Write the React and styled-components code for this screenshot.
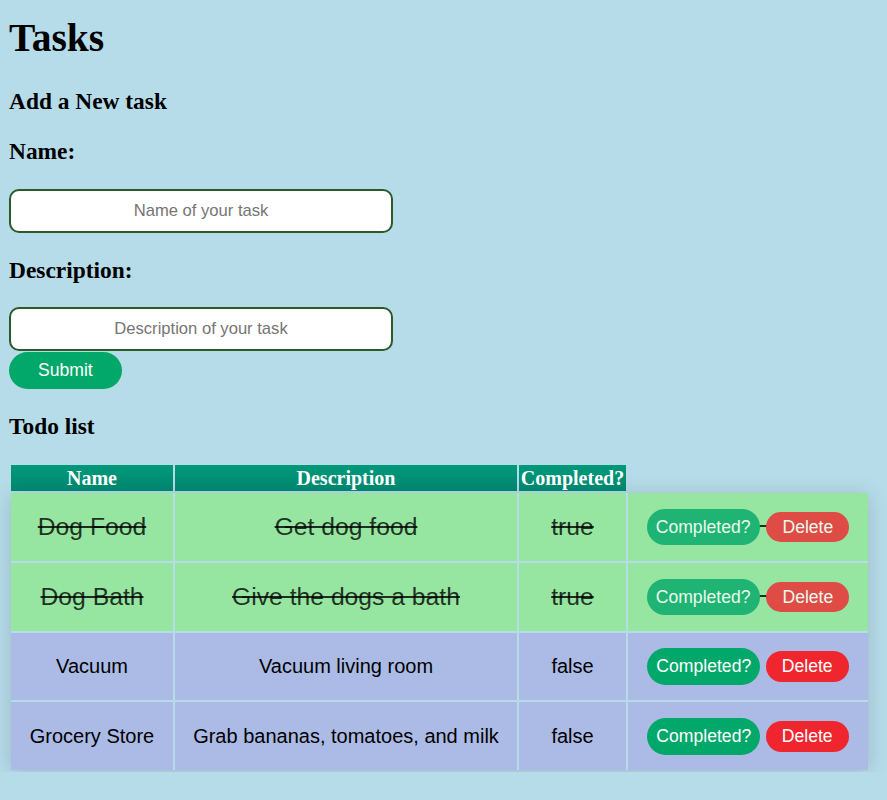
import React from "react";
import styled, { createGlobalStyle } from "styled-components";

const Global = createGlobalStyle`
  html, body {
    margin: 0;
    padding: 0;
    background: #b6dcea;
  }
  body {
    font-family: "Liberation Serif", "Times New Roman", serif;
  }
`;

const Page = styled.div`
  padding: 0 9px;
`;

const Title = styled.h1`
  font-family: "Liberation Serif", "Times New Roman", serif;
  font-size: 39.5px;
  line-height: 1.15;
  font-weight: bold;
  margin: 15.7px 0 26.6px;
  color: #000;
`;

const Heading = styled.h3`
  font-family: "Liberation Serif", "Times New Roman", serif;
  font-size: 23.4px;
  line-height: 26.45px;
  font-weight: bold;
  margin: 24px 0;
  color: #000;
`;

const Form = styled.form`
  display: block;
  margin: 0;
`;

const Input = styled.input`
  display: block;
  box-sizing: border-box;
  width: 384px;
  height: 44px;
  margin: 0 0 ${(p) => p.$mb || 0}px;
  padding: 0 12px;
  border: 2px solid #2b5a2b;
  border-radius: 10px;
  background: #fff;
  font-family: "Liberation Sans", Arial, sans-serif;
  font-size: 16.6px;
  text-align: center;
  outline: none;
  &::placeholder {
    color: #757575;
  }
`;

const SubmitButton = styled.button`
  display: block;
  border: none;
  border-radius: 19px;
  background: #02a86a;
  color: #fff;
  font-family: "Liberation Sans", Arial, sans-serif;
  font-size: 17.6px;
  line-height: 1.15;
  padding: 8.3px 29px;
  margin: 0;
  cursor: pointer;
`;

const Table = styled.table`
  border-collapse: separate;
  border-spacing: 2px;
  margin: 0;
`;

const Body = styled.tbody`
  box-shadow: 0 2px 20px rgba(0, 0, 0, 0.16);
`;

const Th = styled.th`
  box-sizing: border-box;
  width: ${(p) => p.$w}px;
  height: 26px;
  padding: 1px;
  font-family: "Liberation Serif", "Times New Roman", serif;
  font-size: 20px;
  line-height: 1.15;
  font-weight: bold;
  color: #fff;
  text-align: center;
  background: ${(p) =>
    p.$empty ? "transparent" : "linear-gradient(#00987a, #008a72)"};
`;

const Row = styled.tr`
  background: ${(p) => (p.$done ? "#96e6a1" : "#abbbe6")};
`;

const Td = styled.td`
  box-sizing: border-box;
  height: 67.7px;
  padding: 0 18px;
  vertical-align: middle;
  text-align: center;
  font-family: "Liberation Sans", Arial, sans-serif;
  font-size: ${(p) => (p.$done ? "24.7px" : "20px")};
  line-height: 1.15;
  color: ${(p) => (p.$done ? "rgba(0,0,0,0.8)" : "#000")};
  text-decoration: ${(p) => (p.$done ? "line-through" : "none")};
  white-space: nowrap;
`;

const Pill = styled.button`
  display: inline-block;
  vertical-align: middle;
  border: none;
  border-radius: 20px;
  font-family: "Liberation Sans", Arial, sans-serif;
  font-size: 17.6px;
  line-height: 1.15;
  color: #fff;
  margin: 0;
  cursor: pointer;
  background: ${(p) => (p.$kind === "delete" ? "#f0262f" : "#02a86a")};
  padding: ${(p) => (p.$kind === "delete" ? "5.2px 16px" : "8.2px 9px")};
  opacity: ${(p) => (p.$done ? 0.8 : 1)};
`;

const tasks = [
  { name: "Dog Food", desc: "Get dog food", done: true },
  { name: "Dog Bath", desc: "Give the dogs a bath", done: true },
  { name: "Vacuum", desc: "Vacuum living room", done: false },
  {
    name: "Grocery Store",
    desc: "Grab bananas, tomatoes, and milk",
    done: false,
  },
];

export default function App() {
  return (
    <Page>
      <Global />
      <Title>Tasks</Title>
      <Heading>Add a New task</Heading>
      <Form onSubmit={(e) => e.preventDefault()}>
        <Heading>Name:</Heading>
        <Input placeholder="Name of your task" />
        <Heading>Description:</Heading>
        <Input placeholder="Description of your task" $mb={1} />
        <SubmitButton type="submit">Submit</SubmitButton>
      </Form>
      <Heading>Todo list</Heading>
      <Table>
        <thead>
          <tr>
            <Th $w={162}>Name</Th>
            <Th $w={342}>Description</Th>
            <Th $w={107}>Completed?</Th>
            <Th $w={240} $empty />
          </tr>
        </thead>
        <Body>
          {tasks.map((t) => (
            <Row key={t.name} $done={t.done}>
              <Td $done={t.done}>{t.name}</Td>
              <Td $done={t.done}>{t.desc}</Td>
              <Td $done={t.done}>{t.done ? "true" : "false"}</Td>
              <Td $done={t.done}>
                <Pill $done={t.done}>Completed?</Pill>{" "}
                <Pill $kind="delete" $done={t.done}>
                  Delete
                </Pill>
              </Td>
            </Row>
          ))}
        </Body>
      </Table>
    </Page>
  );
}
